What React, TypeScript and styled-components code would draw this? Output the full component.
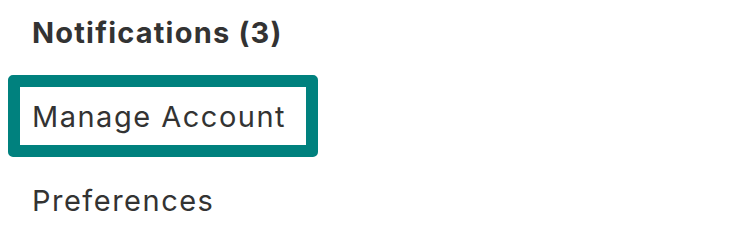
import { FC } from "react";
import styled, { createGlobalStyle } from "styled-components";

const GlobalStyle = createGlobalStyle`
  body {
    margin: 0;
    background: #ffffff;
    font-family: "Inter", "Liberation Sans", sans-serif;
    color: #333333;
  }
`

const Menu = styled.nav`
  display: flex;
  flex-direction: column;
  padding-left: 8px;
  width: 310px;
`

const Title = styled.div`
  display: flex;
  align-items: center;
  height: 64px;
  margin-bottom: 11px;
  padding-left: 24px;
  font-size: 29px;
  font-weight: 700;
  letter-spacing: 1.2px;
  white-space: nowrap;
`

type ItemProps = {
  $focused?: boolean
}

const Item = styled.a<ItemProps>`
  display: flex;
  align-items: center;
  box-sizing: border-box;
  height: 82px;
  margin-bottom: 2px;
  padding: 0 12px;
  border: 12.5px solid ${p => (p.$focused ? "#00817e" : "transparent")};
  border-radius: 5px;
  font-size: 29px;
  font-weight: 400;
  letter-spacing: 1.5px;
  color: #333333;
  text-decoration: none;
  white-space: nowrap;
  cursor: pointer;
`

const App: FC = () => {
  const count = 3

  return (
    <>
      <GlobalStyle />
      <Menu>
        <Title>Notifications ({count})</Title>
        <Item $focused>Manage Account</Item>
        <Item>Preferences</Item>
      </Menu>
    </>
  )
}

export default App;
